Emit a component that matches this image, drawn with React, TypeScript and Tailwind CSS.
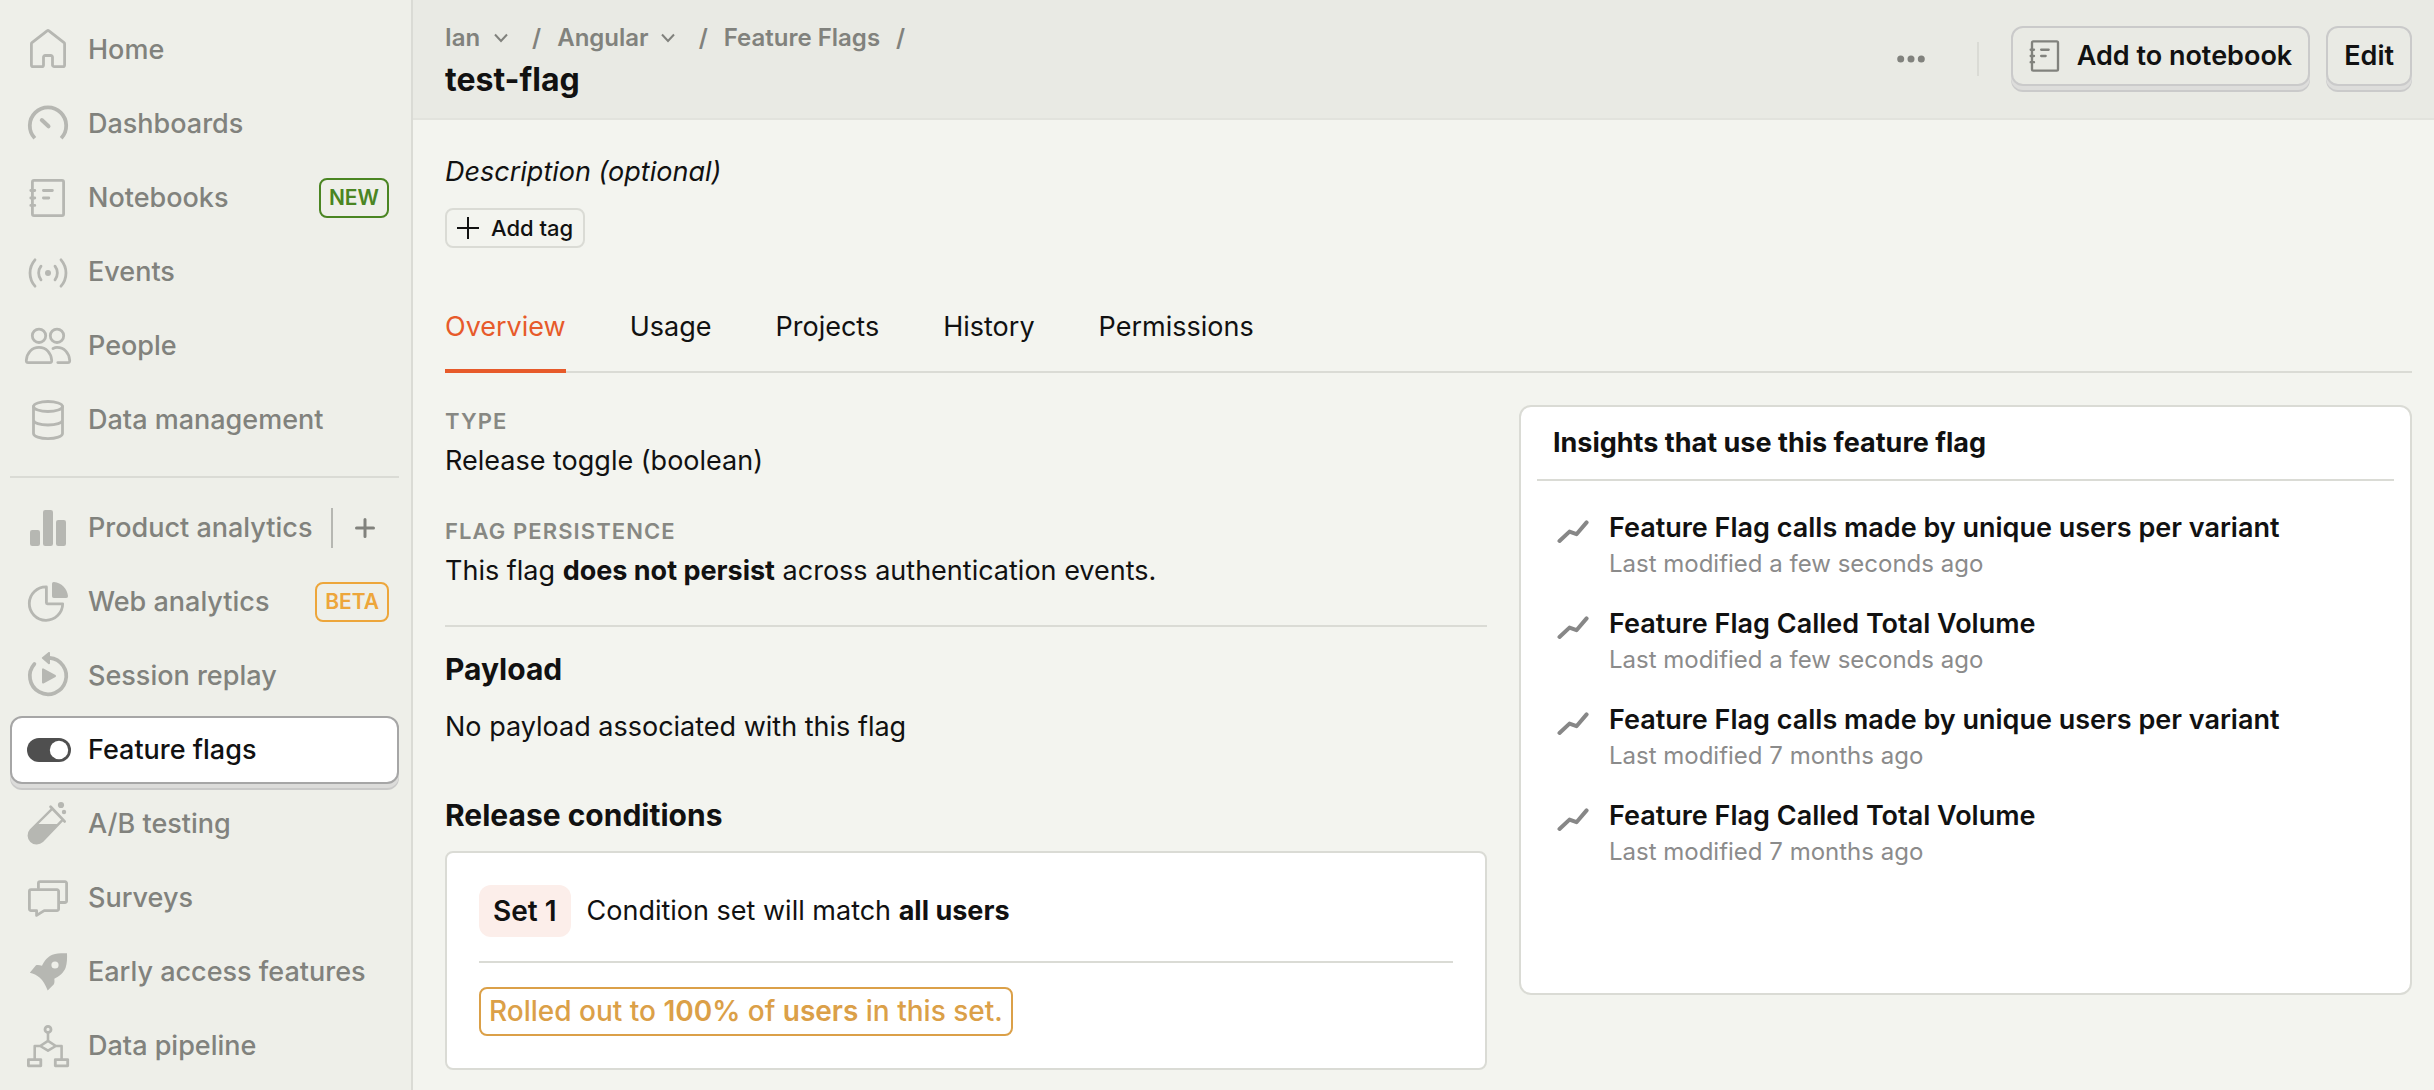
import React from "react";

type IconProps = { className?: string };

function Svg({ children, className = "size-12" }: { children: React.ReactNode; className?: string }) {
  return (
    <svg
      viewBox="0 0 48 48"
      className={className + " shrink-0"}
      fill="none"
      stroke="currentColor"
      strokeWidth="2.8"
      strokeLinecap="round"
      strokeLinejoin="round"
      aria-hidden="true"
    >
      {children}
    </svg>
  );
}

const HomeIcon = () => (
  <Svg>
    <path d="M24.9 4.8a1.6 1.6 0 0 0-1.8 0L8 16.6a1.6 1.6 0 0 0-.6 1.3V38.900a1.700 1.700 0 0 0 1.700 1.700h8.700a1.700 1.700 0 0 0 1.700-1.700V31.200a1.700 1.700 0 0 1 1.700-1.700h5.600a1.700 1.700 0 0 1 1.700 1.700v7.700a1.700 1.700 0 0 0 1.700 1.700h8.700a1.700 1.700 0 0 0 1.700-1.700V17.900a1.600 1.600 0 0 0-.6-1.300Z" />
  </Svg>
);

const DashboardIcon = () => (
  <Svg>
    <path d="M10.800 38.200a18.200 18.200 0 1 1 26.400 0" strokeWidth="3.800" strokeLinecap="butt" />
    <path d="m17.800 20 6.700 6.300" strokeWidth="4" />
  </Svg>
);

const NotebookIcon = ({ className = "size-12" }: IconProps) => (
  <Svg className={className}>
    <rect x="8.400" y="6.400" width="31.200" height="35.200" rx="1.600" />
    <path d="M6.800 16.500h4M6.800 24h4M6.800 31.400h4M19.400 16.500h9M19.400 24h5.400" />
  </Svg>
);

const EventsIcon = () => (
  <Svg>
    <circle cx="24" cy="25" r="3" fill="currentColor" stroke="none" />
    <path d="M17 18.200a11 11 0 0 0 0 13.600M31 18.200a11 11 0 0 1 0 13.600M11 11.800a20 20 0 0 0 0 26.400M37 11.800a20 20 0 0 1 0 26.400" />
  </Svg>
);

const PeopleIcon = () => (
  <Svg>
    <circle cx="15" cy="13.800" r="6.700" />
    <circle cx="33" cy="13.800" r="6.700" />
    <path d="M15 25.400c-7.200 0-12.200 5.600-12.700 13-.1 1.400.5 2.200 1.800 2.200h21.800c1.300 0 1.900-.8 1.800-2.200-.5-7.400-5.500-13-12.700-13Z" />
    <path d="M29 26.500c1.400-.7 2.500-1.100 4-1.100 7.200 0 12.200 5.600 12.700 13 .1 1.400-.5 2.200-1.800 2.200H33.800" />
  </Svg>
);

const DatabaseIcon = () => (
  <Svg>
    <ellipse cx="24" cy="10.500" rx="14.500" ry="5" />
    <path d="M9.500 10.500v27c0 2.900 6.500 5.100 14.500 5.100s14.500-2.200 14.500-5.100v-27M9.500 24c0 2.900 6.500 5 14.500 5s14.500-2.100 14.500-5" />
  </Svg>
);

const BarsIcon = () => (
  <Svg>
    <g fill="currentColor" stroke="none">
      <rect x="6" y="26" width="10" height="16" rx="2.200" />
      <rect x="19" y="6" width="10" height="36" rx="2.200" />
      <rect x="32" y="16" width="10" height="26" rx="2.200" />
    </g>
  </Svg>
);

const PieIcon = () => (
  <Svg>
    <path d="M22.400 8.900a16.700 16.700 0 1 0 16.300 16.900H23.400a1 1 0 0 1-1-1Z" />
    <path d="M28 5.800A1.800 1.800 0 0 1 30 4c7.500.8 13.200 6.500 14 14a1.800 1.800 0 0 1-1.800 2H29.800a1.800 1.800 0 0 1-1.800-1.800Z" fill="currentColor" stroke="none" />
  </Svg>
);

const ReplayIcon = () => (
  <Svg>
    <path d="M25.500 5.900A18.200 18.200 0 1 1 10.400 12" strokeWidth="3.700" />
    <path d="M18.900 6 25 .9V11.200Z" fill="currentColor" strokeWidth="2" />
    <path d="M19 17.400v13.200L31 24Z" fill="currentColor" strokeWidth="2" />
  </Svg>
);

const ToggleIcon = () => (
  <Svg>
    <rect x="3" y="12" width="44" height="24" rx="12" fill="currentColor" stroke="none" />
    <circle cx="35" cy="24" r="9.200" fill="#fff" stroke="none" />
  </Svg>
);

const TubeIcon = () => (
  <Svg>
    <path d="m26.600 6.800 14 14.600" />
    <path d="M27.600 9.400 6.800 30a8 8 0 0 0 11.400 11.200l20.400-21.400" strokeWidth="2.400" />
    <path d="M12.800 24h21.400L18.400 41a8 8 0 0 1-11.800-11Z" fill="currentColor" stroke="none" />
    <circle cx="37" cy="5" r="3.100" fill="currentColor" stroke="none" />
    <circle cx="40" cy="12" r="2.200" fill="currentColor" stroke="none" />
  </Svg>
);

const SurveyIcon = () => (
  <Svg>
    <path d="M14.400 14V9.300a1.600 1.600 0 0 1 1.600-1.600h25a1.600 1.600 0 0 1 1.600 1.600v17.600a1.600 1.600 0 0 1-1.600 1.600h-5" />
    <path d="M7 15.700h26a1.600 1.600 0 0 1 1.600 1.600V35a1.600 1.600 0 0 1-1.600 1.600H20.200l-7.600 4.800v-4.800H7A1.600 1.600 0 0 1 5.400 35V17.300A1.600 1.600 0 0 1 7 15.700Z" />
  </Svg>
);

const RocketIcon = () => (
  <Svg>
    <path
      fillRule="evenodd"
      d="M43 5.300c-5-.2-10.400 0-14.600 1.500-4.400 1.700-8.200 6.200-10.400 10.900-2.200-.6-4.400-1-6-.4L5.800 24.700C13 26.200 19.400 30.600 23.700 42.500l6.200-6.300c.7-1.600.7-3.400.4-5.500 5-2.200 9.600-6.400 11.300-11 1.500-4.200 1.600-9.400 1.400-14.400ZM31 13.400a3.600 3.600 0 1 1 0 7.200 3.600 3.600 0 0 1 0-7.200Z"
      fill="currentColor"
      stroke="none"
    />
  </Svg>
);

const PipelineIcon = () => (
  <Svg>
    <circle cx="24" cy="7.400" r="3" />
    <path d="M24 10.500v8.300M24 18.900l7.800 5.100-7.800 4.700-7.800-4.700ZM16 24h-5.300v13M32 24h5.600v13" strokeLinecap="butt" strokeWidth="2.600" />
    <rect x="4.400" y="37.600" width="12.400" height="6.200" />
    <rect x="31.300" y="37.600" width="12.400" height="6.200" />
  </Svg>
);

function ChevronDown() {
  return (
    <svg viewBox="0 0 14 10" className="w-3.5 shrink-0" fill="none" stroke="currentColor" strokeWidth="2" aria-hidden="true">
      <path d="m1 1.500 6 6.500 6-6.500" />
    </svg>
  );
}

function TrendIcon() {
  return (
    <svg viewBox="0 0 32 24" className="mt-2.5 h-6 w-8 shrink-0 text-[#878787]" fill="none" stroke="currentColor" strokeWidth="4" strokeLinecap="round" strokeLinejoin="round" aria-hidden="true">
      <path d="M2.500 21 12.500 11.600l7 2.600L29.600 2.400" />
    </svg>
  );
}

type NavItem = { label: string; icon: () => React.ReactElement; badge?: "NEW" | "BETA"; add?: boolean; active?: boolean };

const primaryNav: NavItem[] = [
  { label: "Home", icon: HomeIcon },
  { label: "Dashboards", icon: DashboardIcon },
  { label: "Notebooks", icon: NotebookIcon, badge: "NEW" },
  { label: "Events", icon: EventsIcon },
  { label: "People", icon: PeopleIcon },
  { label: "Data management", icon: DatabaseIcon },
];

const productNav: NavItem[] = [
  { label: "Product analytics", icon: BarsIcon, add: true },
  { label: "Web analytics", icon: PieIcon, badge: "BETA" },
  { label: "Session replay", icon: ReplayIcon },
  { label: "Feature flags", icon: ToggleIcon, active: true },
  { label: "A/B testing", icon: TubeIcon },
  { label: "Surveys", icon: SurveyIcon },
  { label: "Early access features", icon: RocketIcon },
  { label: "Data pipeline", icon: PipelineIcon },
];

const insights = [
  { title: "Feature Flag calls made by unique users per variant", modified: "Last modified a few seconds ago" },
  { title: "Feature Flag Called Total Volume", modified: "Last modified a few seconds ago" },
  { title: "Feature Flag calls made by unique users per variant", modified: "Last modified 7 months ago" },
  { title: "Feature Flag Called Total Volume", modified: "Last modified 7 months ago" },
];

const tabs = ["Overview", "Usage", "Projects", "History", "Permissions"];

function NavRow({ item }: { item: NavItem }) {
  const Icon = item.icon;
  return (
    <li
      className={
        item.active
          ? "flex h-17 items-center rounded-xl border-2 border-[#a6a6a6] bg-white pr-2 pl-3 text-[#111] shadow-[0_4px_0_#dcdcda,0_6px_0_#c9c9c8]"
          : "flex h-17 items-center rounded-xl border-2 border-transparent pr-2 pl-3 text-[#81827d]"
      }
    >
      <a href="#" aria-current={item.active ? "page" : undefined} className="flex min-w-0 flex-1 items-center gap-4">
        <span className={item.active ? "text-[#4f4f4f]" : "text-[#b6b7b2]"}>
          <Icon />
        </span>
        <span className="whitespace-nowrap text-[27px] leading-10 font-medium">{item.label}</span>
      </a>
      {item.badge === "NEW" && (
        <span className="rounded-lg border-2 border-[#4a8522] px-2 text-[21px] leading-9 font-semibold text-[#4a8522]">NEW</span>
      )}
      {item.badge === "BETA" && (
        <span className="rounded-lg border-2 border-[#eda63b] px-2 text-[21px] leading-9 font-semibold text-[#eda63b]">BETA</span>
      )}
      {item.add && (
        <button type="button" aria-label="New insight" className="flex h-10 items-center border-l-2 border-[#b6b7b2] pr-3.5 pl-5.5">
          <svg viewBox="0 0 20 20" className="size-5" stroke="currentColor" strokeWidth="3" strokeLinecap="round" aria-hidden="true">
            <path d="M10 1.500v17M1.500 10h17" />
          </svg>
        </button>
      )}
    </li>
  );
}

function Sidebar() {
  return (
    <nav aria-label="Main" className="w-[413px] shrink-0 border-r-2 border-[#dadbd5] bg-[#eeefe9] pt-4 pr-3 pb-2 pl-2.5">
      <ul className="flex flex-col gap-1.5">
        {primaryNav.map((item) => (
          <NavRow key={item.label} item={item} />
        ))}
      </ul>
      <hr className="mt-5.5 mb-4 border-t-2 border-[#dadbd5]" />
      <ul className="flex flex-col gap-1.5">
        {productNav.map((item) => (
          <NavRow key={item.label} item={item} />
        ))}
      </ul>
    </nav>
  );
}

function Header() {
  const raised =
    "mb-1.5 flex h-15 items-center gap-3 rounded-xl border-2 border-[#cacaca] bg-[#e9eae4] px-4 text-[27px] font-semibold shadow-[0_4px_0_#dddddb,0_6px_0_#cacaca]";
  return (
    <header className="flex h-30 items-center justify-between border-b-2 border-[#e2e3dd] bg-[#e9eae4] pr-[22px] pl-8">
      <div className="flex flex-col gap-1.5 pt-1">
        <div className="flex items-center text-2xl leading-8 font-semibold text-[#81827d]">
          <button type="button" className="flex items-center gap-3.5">
            Ian
            <ChevronDown />
          </button>
          <span className="pr-4 pl-6">/</span>
          <button type="button" className="flex items-center gap-3">
            Angular
            <ChevronDown />
          </button>
          <span className="pr-4 pl-6">/</span>
          <a href="#">Feature Flags</a>
          <span className="pl-4">/</span>
        </div>
        <h1 className="text-[32px] leading-10 font-bold">test-flag</h1>
      </div>
      <div className="flex items-center">
        <button type="button" aria-label="More options" className="px-5 text-[#81827d]">
          <svg viewBox="0 0 28 8" className="w-7" fill="currentColor" aria-hidden="true">
            <circle cx="3.700" cy="4" r="3.500" />
            <circle cx="14" cy="4" r="3.500" />
            <circle cx="24.300" cy="4" r="3.500" />
          </svg>
        </button>
        <div className="mr-8 ml-8 h-[34px] w-0.5 bg-[#dadbd5]" />
        <div className="flex gap-4">
          <button type="button" className={raised + " pl-3"}>
            <span className="text-[#81827d]">
              <NotebookIcon className="size-10" />
            </span>
            Add to notebook
          </button>
          <button type="button" className={raised}>
            Edit
          </button>
        </div>
      </div>
    </header>
  );
}

function FlagDetails() {
  return (
    <div>
      <dl>
        <dt className="text-[22px] leading-8 font-semibold tracking-wider text-[#878883] uppercase">Type</dt>
        <dd className="mt-1 text-[27px] leading-10">Release toggle (boolean)</dd>
        <dt className="mt-[34px] text-[22px] leading-8 font-semibold tracking-wider text-[#878883] uppercase">Flag persistence</dt>
        <dd className="mt-1 text-[27px] leading-10">
          This flag <b className="font-bold">does not persist</b> across authentication events.
        </dd>
      </dl>
      <hr className="mt-[34px] mb-5 border-t-2 border-[#dadbd5]" />
      <h2 className="text-[30px] leading-11 font-bold">Payload</h2>
      <p className="mt-4 text-[27px] leading-10">No payload associated with this flag</p>
      <h2 className="mt-[46px] text-[30px] leading-11 font-bold">Release conditions</h2>
      <section className="mt-3.5 rounded-lg border-2 border-[#dadbd5] bg-white p-8">
        <div className="flex items-center gap-4 text-[27px] leading-[52px]">
          <span className="rounded-xl bg-[#fceeea] px-3.5 text-[28px] font-semibold">Set 1</span>
          <span>
            Condition set will match <b className="font-bold">all users</b>
          </span>
        </div>
        <hr className="my-6 border-t-2 border-[#dadbd5]" />
        <div className="flex">
          <span className="rounded-lg border-2 border-[#dba048] px-2 text-[28px] leading-[45px] font-medium text-[#dba048]">
            Rolled out to <b className="font-semibold">100%</b> of <b className="font-semibold">users</b> in this set.
          </span>
        </div>
      </section>
    </div>
  );
}

function InsightsCard() {
  return (
    <section className="self-start rounded-xl border-2 border-[#dadbd5] bg-white px-4 pb-28">
      <h2 className="border-b-2 border-[#dadbd5] px-4 text-[27px] leading-[72px] font-bold">Insights that use this feature flag</h2>
      <ul className="pt-4">
        {insights.map((insight, index) => (
          <li key={index} className="flex gap-5 py-[13px] pl-5">
            <TrendIcon />
            <div>
              <a href="#" className="block text-[27px] leading-9 font-semibold">
                {insight.title}
              </a>
              <p className="mt-0.5 text-2xl leading-8 text-[#8b8b8b]">{insight.modified}</p>
            </div>
          </li>
        ))}
      </ul>
    </section>
  );
}

export default function App() {
  return (
    <div className="flex min-h-screen bg-[#f3f4ef] font-['Inter',sans-serif] text-[#111]">
      <Sidebar />
      <div className="min-w-0 flex-1">
        <Header />
        <main className="pt-8 pr-[22px] pl-8">
          <p className="text-[27px] leading-10 italic">Description (optional)</p>
          <button type="button" className="mt-4 flex h-10 items-center gap-3 rounded-lg border-2 border-[#dadbd5] px-2.5 text-[22px] font-medium">
            <svg viewBox="0 0 22 22" className="size-[22px]" stroke="currentColor" strokeWidth="2" aria-hidden="true">
              <path d="M11 0v22M0 11h22" />
            </svg>
            Add tag
          </button>
          <div role="tablist" className="mt-8 flex gap-16 shadow-[inset_0_-2px_0_#dadbd5]">
            {tabs.map((tab, index) => (
              <button
                key={tab}
                type="button"
                role="tab"
                aria-selected={index === 0}
                className={
                  index === 0
                    ? "border-b-4 border-[#e75a2a] pt-[27px] pb-[22px] text-[27px] leading-10 text-[#e75a2a]"
                    : "border-b-4 border-transparent pt-[27px] pb-[22px] text-[27px] leading-10"
                }
              >
                {tab}
              </button>
            ))}
          </div>
          <div className="grid grid-cols-[7fr_6fr] gap-8 pt-8">
            <FlagDetails />
            <InsightsCard />
          </div>
        </main>
      </div>
    </div>
  );
}
